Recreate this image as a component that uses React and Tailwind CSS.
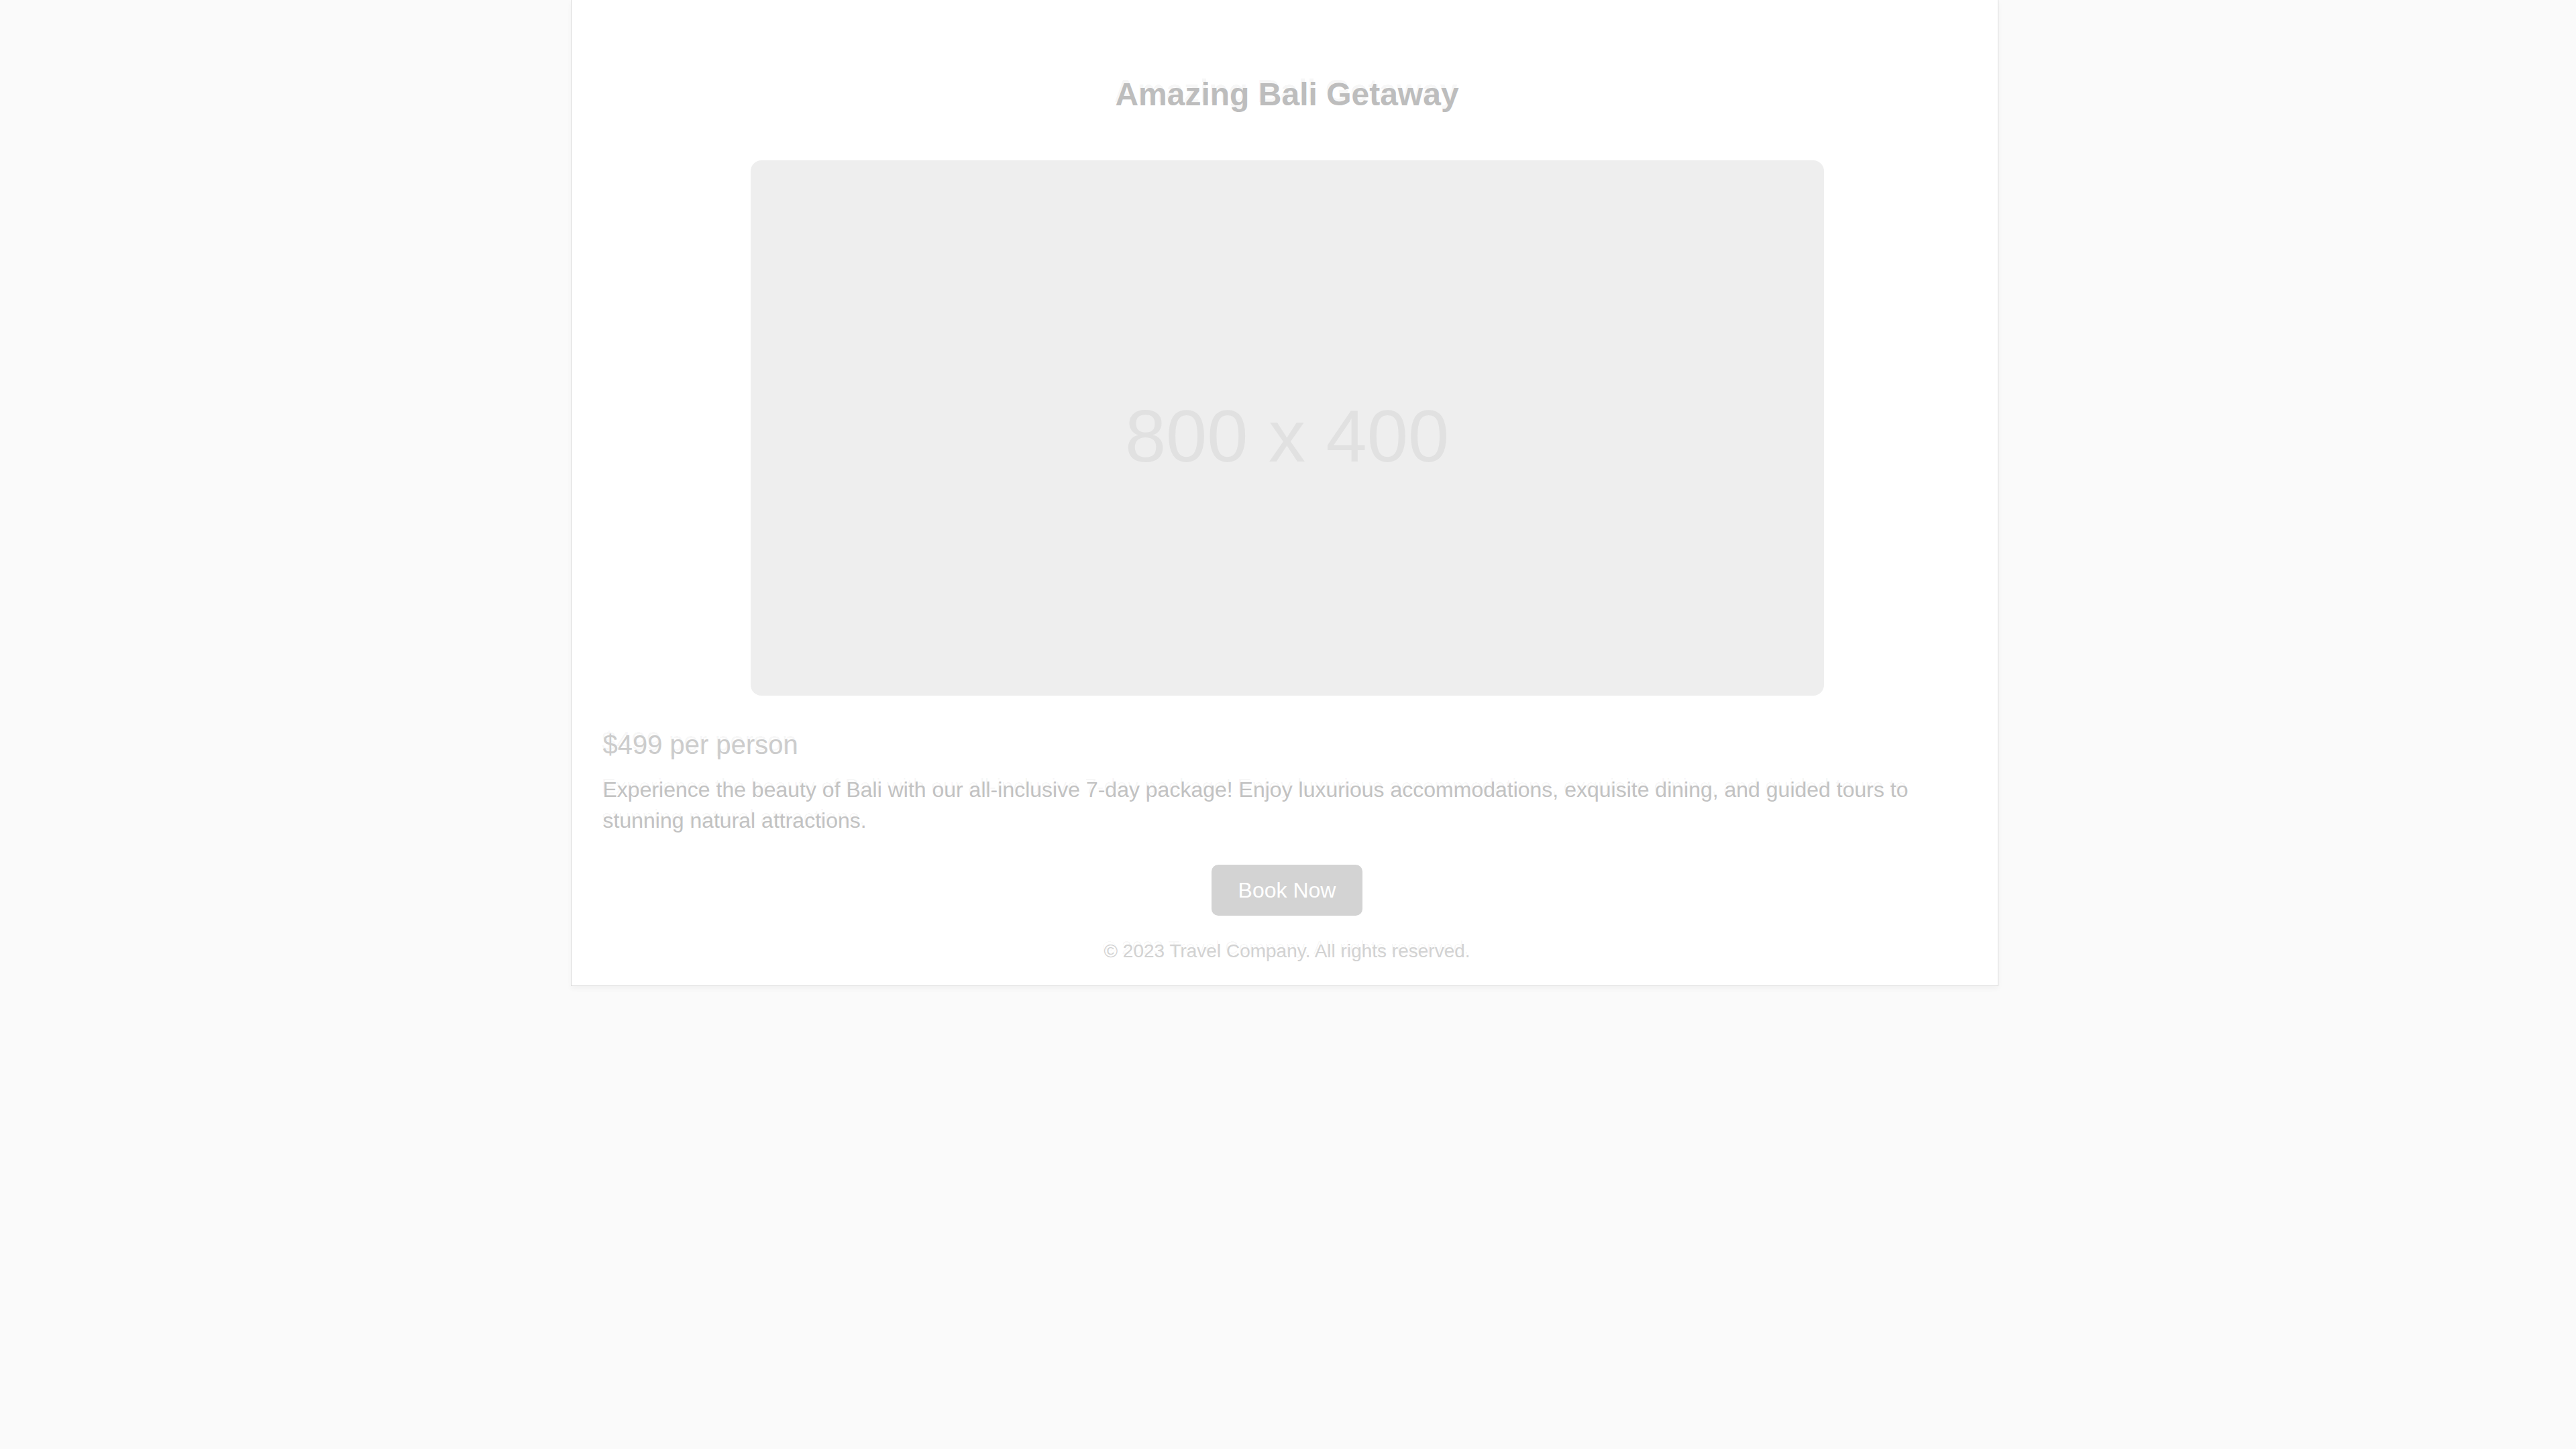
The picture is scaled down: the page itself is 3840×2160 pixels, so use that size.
import React from 'react';

const ghost = '[text-shadow:-2px_-5px_0_rgba(0,0,0,0.035)]';

const App = () => {
  return (
    <div className="min-h-[2160px] w-full bg-[#fafafa] font-['Liberation_Sans',Arial,sans-serif]">
      <div className="flex justify-center pr-[11px]">
        {/* Card */}
        <div className="w-[2128px] bg-white border border-t-0 border-[#dadada] shadow-[0_4px_8px_rgba(0,0,0,0.04)] pl-[47px] pr-[39px] pt-[117px] pb-[35px] flex flex-col">
          <h1 className={`text-center text-[48px] leading-[48px] font-bold text-[#bdbdbd] ${ghost}`}>
            Amazing Bali Getaway
          </h1>

          {/* Placeholder image */}
          <div className="mt-[74px] self-center w-[1600px] h-[798px] rounded-[16px] bg-[#eeeeee] flex items-center justify-center">
            <span className="text-[110px] leading-none text-[#e1e1e1] mt-[24px]">800 x 400</span>
          </div>

          <p className={`mt-[50px] text-[40px] leading-[46px] text-[#cccccc] ${ghost}`}>$499 per person</p>
          <p className={`mt-[21px] text-[32px] leading-[46px] text-[#c2c2c2] ${ghost}`}>
            Experience the beauty of Bali with our all-inclusive 7-day package! Enjoy luxurious accommodations, exquisite dining, and guided tours to stunning natural attractions.
          </p>

          <div className="mt-[43px] flex justify-center">
            <button className="h-[76px] px-[40px] rounded-[10px] bg-[#d3d3d3] text-white text-[32px] leading-[36px]">
              Book Now
            </button>
          </div>

          <p className={`mt-[37px] text-center text-[28px] leading-[32px] text-[#d2d2d2] ${ghost}`}>
            © 2023 Travel Company. All rights reserved.
          </p>
        </div>
      </div>
    </div>
  );
};

export default App;
